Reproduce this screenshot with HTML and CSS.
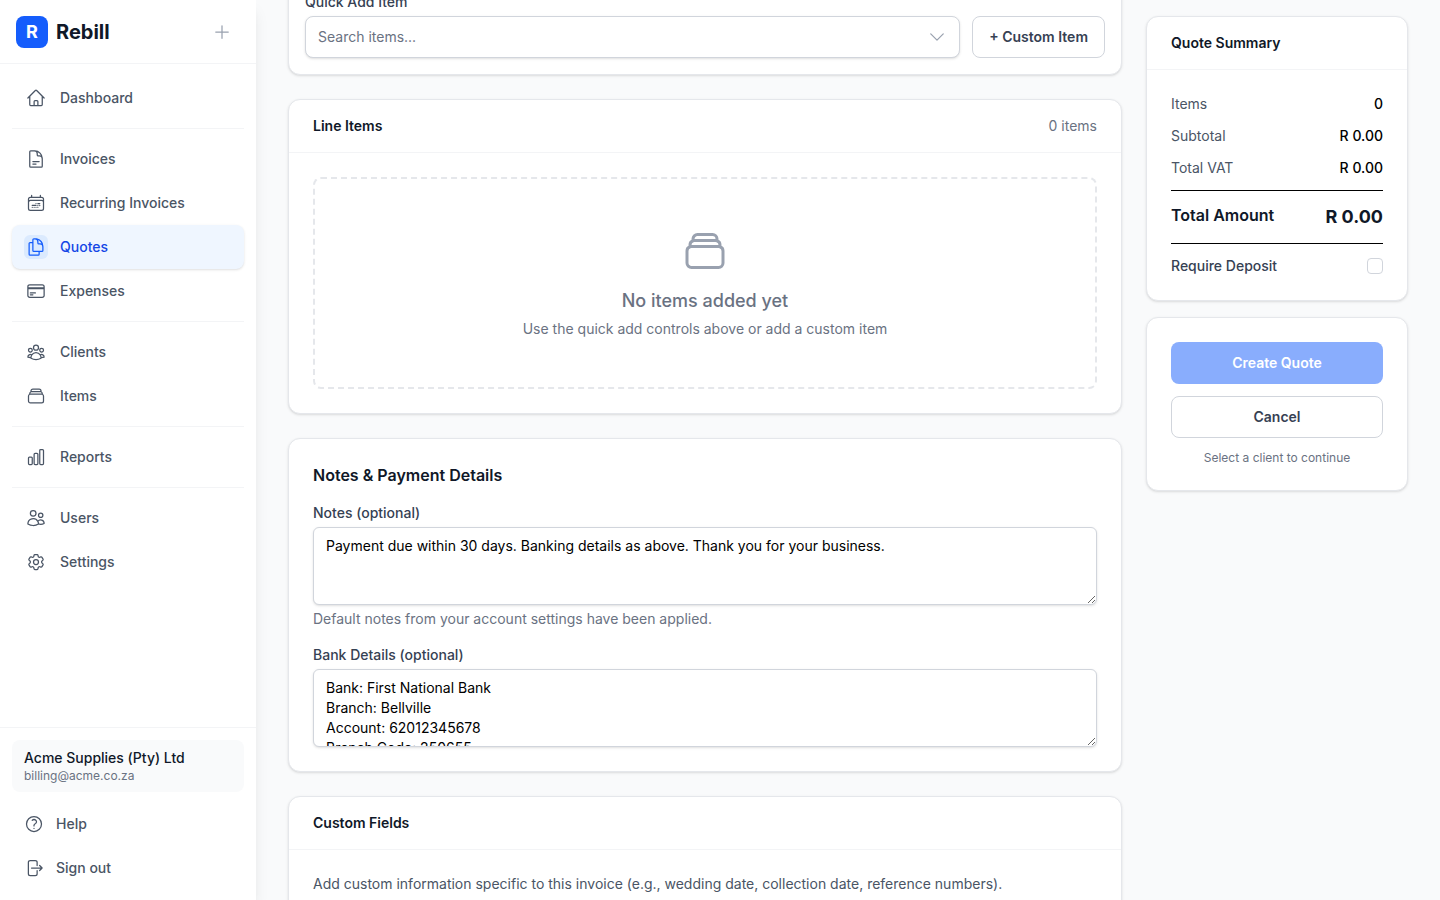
FILE: index.html
```html
<!DOCTYPE html>
<html lang="en">
<head>
    <meta charset="UTF-8">
    <meta name="viewport" content="width=device-width, initial-scale=1.0">
    <title>Create Quote - Rebill</title>
    <link rel="stylesheet" href="styles.css">
</head>
<body>
    <div class="app">
        <aside class="sidebar">
            <div class="sidebar-header">
                <a href="#" class="brand"><span class="logo">R</span>Rebill</a>
                <button type="button" class="add-button" aria-label="Create new">
                    <svg class="icon" viewBox="0 0 24 24"><path d="M12 4.5v15m7.5-7.5h-15"/></svg>
                </button>
            </div>

            <nav class="nav">
                <a href="#" class="nav-link">
                    <span class="nav-icon"><svg class="icon" viewBox="0 0 24 24"><path d="m2.25 12 8.954-8.955c.44-.439 1.152-.439 1.591 0L21.75 12M4.5 9.75v10.125c0 .621.504 1.125 1.125 1.125H9.75v-4.875c0-.621.504-1.125 1.125-1.125h2.25c.621 0 1.125.504 1.125 1.125V21h4.125c.621 0 1.125-.504 1.125-1.125V9.75M8.25 21h8.25"/></svg></span>
                    Dashboard
                </a>
                <hr>
                <a href="#" class="nav-link">
                    <span class="nav-icon"><svg class="icon" viewBox="0 0 24 24"><path d="M19.5 14.25v-2.625a3.375 3.375 0 0 0-3.375-3.375h-1.5A1.125 1.125 0 0 1 13.5 7.125v-1.5a3.375 3.375 0 0 0-3.375-3.375H8.25m0 12.75h7.5m-7.5 3H12M10.5 2.25H5.625c-.621 0-1.125.504-1.125 1.125v17.25c0 .621.504 1.125 1.125 1.125h12.75c.621 0 1.125-.504 1.125-1.125V11.25a9 9 0 0 0-9-9Z"/></svg></span>
                    Invoices
                </a>
                <a href="#" class="nav-link">
                    <span class="nav-icon"><svg class="icon" viewBox="0 0 24 24"><path d="M6.75 2.994v2.25m10.5-2.25v2.25m-14.252 13.5V7.491a2.25 2.25 0 0 1 2.25-2.25h13.5a2.25 2.25 0 0 1 2.25 2.25v11.251m-18 0a2.25 2.25 0 0 0 2.25 2.25h13.5a2.25 2.25 0 0 0 2.25-2.25m-18 0v-7.5a2.25 2.25 0 0 1 2.25-2.25h13.5a2.25 2.25 0 0 1 2.25 2.25v7.5m-6.75-6h2.25m-9 2.25h4.5m.002-2.25h.005v.006H12v-.006Zm-.001 4.5h.006v.006h-.006v-.005Zm-2.25.001h.005v.006H9.75v-.006Zm-2.25 0h.005v.005h-.006v-.005Zm6.75-2.247h.005v.005h-.005v-.005Zm0 2.247h.006v.006h-.006v-.006Zm2.25-2.248h.006V15H16.5v-.005Z"/></svg></span>
                    Recurring Invoices
                </a>
                <a href="#" class="nav-link active" aria-current="page">
                    <span class="nav-icon"><svg class="icon" viewBox="0 0 24 24"><path d="M15.75 17.25v3.375c0 .621-.504 1.125-1.125 1.125h-9.75a1.125 1.125 0 0 1-1.125-1.125V7.875c0-.621.504-1.125 1.125-1.125H6.75a9.06 9.06 0 0 1 1.5.124m7.5 10.376h3.375c.621 0 1.125-.504 1.125-1.125V11.25c0-4.46-3.243-8.161-7.5-8.876a9.06 9.06 0 0 0-1.5-.124H9.375c-.621 0-1.125.504-1.125 1.125v3.5m7.5 10.375H9.375a1.125 1.125 0 0 1-1.125-1.125v-9.25m12 6.625v-1.875a3.375 3.375 0 0 0-3.375-3.375h-1.5a1.125 1.125 0 0 1-1.125-1.125v-1.5a3.375 3.375 0 0 0-3.375-3.375H9.75"/></svg></span>
                    Quotes
                </a>
                <a href="#" class="nav-link">
                    <span class="nav-icon"><svg class="icon" viewBox="0 0 24 24"><path d="M2.25 8.25h19.5M2.25 9h19.5m-16.5 5.25h6m-6 2.25h3m-3.75 3h15a2.25 2.25 0 0 0 2.25-2.25V6.75A2.25 2.25 0 0 0 19.5 4.5h-15a2.25 2.25 0 0 0-2.25 2.25v10.5A2.25 2.25 0 0 0 4.5 19.5Z"/></svg></span>
                    Expenses
                </a>
                <hr>
                <a href="#" class="nav-link">
                    <span class="nav-icon"><svg class="icon" viewBox="0 0 24 24"><path d="M18 18.72a9.094 9.094 0 0 0 3.741-.479 3 3 0 0 0-4.682-2.72m.94 3.198.001.031c0 .225-.012.447-.037.666A11.944 11.944 0 0 1 12 21c-2.17 0-4.207-.576-5.963-1.584A6.062 6.062 0 0 1 6 18.719m12 0a5.971 5.971 0 0 0-.941-3.197m0 0A5.995 5.995 0 0 0 12 12.75a5.995 5.995 0 0 0-5.058 2.772m0 0a3 3 0 0 0-4.681 2.72 8.986 8.986 0 0 0 3.74.477m.94-3.197a5.971 5.971 0 0 0-.94 3.197M15 6.75a3 3 0 1 1-6 0 3 3 0 0 1 6 0Zm6 3a2.25 2.25 0 1 1-4.5 0 2.25 2.25 0 0 1 4.5 0Zm-13.5 0a2.25 2.25 0 1 1-4.5 0 2.25 2.25 0 0 1 4.5 0Z"/></svg></span>
                    Clients
                </a>
                <a href="#" class="nav-link">
                    <span class="nav-icon"><svg class="icon" viewBox="0 0 24 24"><path d="M6 6.878V6a2.25 2.25 0 0 1 2.25-2.25h7.5A2.25 2.25 0 0 1 18 6v.878m-12 0c.235-.083.487-.128.75-.128h10.5c.263 0 .515.045.75.128m-12 0A2.25 2.25 0 0 0 4.5 9v.878m13.5-3A2.25 2.25 0 0 1 19.5 9v.878m0 0a2.246 2.246 0 0 0-.75-.128H5.25c-.263 0-.515.045-.75.128m15 0A2.25 2.25 0 0 1 21 12v6a2.25 2.25 0 0 1-2.25 2.25H5.25A2.25 2.25 0 0 1 3 18v-6c0-.98.626-1.813 1.5-2.122"/></svg></span>
                    Items
                </a>
                <hr>
                <a href="#" class="nav-link">
                    <span class="nav-icon"><svg class="icon" viewBox="0 0 24 24"><path d="M3 13.125C3 12.504 3.504 12 4.125 12h2.25c.621 0 1.125.504 1.125 1.125v6.75C7.5 20.496 6.996 21 6.375 21h-2.25A1.125 1.125 0 0 1 3 19.875v-6.75ZM9.75 8.625c0-.621.504-1.125 1.125-1.125h2.25c.621 0 1.125.504 1.125 1.125v11.25c0 .621-.504 1.125-1.125 1.125h-2.25a1.125 1.125 0 0 1-1.125-1.125V8.625ZM16.5 4.125c0-.621.504-1.125 1.125-1.125h2.25C20.496 3 21 3.504 21 4.125v15.75c0 .621-.504 1.125-1.125 1.125h-2.25a1.125 1.125 0 0 1-1.125-1.125V4.125Z"/></svg></span>
                    Reports
                </a>
                <hr>
                <a href="#" class="nav-link">
                    <span class="nav-icon"><svg class="icon" viewBox="0 0 24 24"><path d="M15 19.128a9.38 9.38 0 0 0 2.625.372 9.337 9.337 0 0 0 4.121-.952 4.125 4.125 0 0 0-7.533-2.493M15 19.128v-.003c0-1.113-.285-2.16-.786-3.07M15 19.128v.106A12.318 12.318 0 0 1 8.624 21c-2.331 0-4.512-.645-6.374-1.766l-.001-.109a6.375 6.375 0 0 1 11.964-3.07M12 6.375a3.375 3.375 0 1 1-6.75 0 3.375 3.375 0 0 1 6.75 0Zm8.25 2.25a2.625 2.625 0 1 1-5.25 0 2.625 2.625 0 0 1 5.25 0Z"/></svg></span>
                    Users
                </a>
                <a href="#" class="nav-link">
                    <span class="nav-icon"><svg class="icon" viewBox="0 0 24 24"><path d="M9.594 3.94c.09-.542.56-.94 1.11-.94h2.593c.55 0 1.02.398 1.11.94l.213 1.281c.063.374.313.686.645.87.074.04.147.083.22.127.325.196.72.257 1.075.124l1.217-.456a1.125 1.125 0 0 1 1.37.49l1.296 2.247a1.125 1.125 0 0 1-.26 1.431l-1.003.827c-.293.241-.438.613-.43.992a7.723 7.723 0 0 1 0 .255c-.008.378.137.75.43.991l1.004.827c.424.35.534.955.26 1.43l-1.298 2.247a1.125 1.125 0 0 1-1.369.491l-1.217-.456c-.355-.133-.75-.072-1.076.124a6.47 6.47 0 0 1-.22.128c-.331.183-.581.495-.644.869l-.213 1.281c-.09.543-.56.94-1.11.94h-2.594c-.55 0-1.019-.398-1.11-.94l-.213-1.281c-.062-.374-.312-.686-.644-.87a6.52 6.52 0 0 1-.22-.127c-.325-.196-.72-.257-1.076-.124l-1.217.456a1.125 1.125 0 0 1-1.369-.49l-1.297-2.247a1.125 1.125 0 0 1 .26-1.431l1.004-.827c.292-.24.437-.613.43-.991a6.932 6.932 0 0 1 0-.255c.007-.38-.138-.751-.43-.992l-1.004-.827a1.125 1.125 0 0 1-.26-1.43l1.297-2.247a1.125 1.125 0 0 1 1.37-.491l1.216.456c.356.133.751.072 1.076-.124.072-.044.146-.086.22-.128.332-.183.582-.495.644-.869l.214-1.28Z"/><path d="M15 12a3 3 0 1 1-6 0 3 3 0 0 1 6 0Z"/></svg></span>
                    Settings
                </a>
            </nav>

            <div class="sidebar-footer">
                <div class="account">
                    <div class="account-name">Acme Supplies (Pty) Ltd</div>
                    <div class="account-email">billing@acme.co.za</div>
                </div>
                <a href="#" class="footer-link">
                    <svg class="icon" viewBox="0 0 24 24"><path d="M9.879 7.519c1.171-1.025 3.071-1.025 4.242 0 1.172 1.025 1.172 2.687 0 3.712-.203.179-.43.326-.67.442-.745.361-1.45.999-1.45 1.827v.75M21 12a9 9 0 1 1-18 0 9 9 0 0 1 18 0Zm-9 5.25h.008v.008H12v-.008Z"/></svg>
                    Help
                </a>
                <button type="button" class="footer-link">
                    <svg class="icon" viewBox="0 0 24 24"><path d="M15.75 9V5.25A2.25 2.25 0 0 0 13.5 3h-6a2.25 2.25 0 0 0-2.25 2.25v13.5A2.25 2.25 0 0 0 7.5 21h6a2.25 2.25 0 0 0 2.25-2.25V15m3 0 3-3m0 0-3-3m3 3H9"/></svg>
                    Sign out
                </button>
            </div>
        </aside>

        <main class="main">
            <form class="quote-form">
                <div class="form-column">
                    <section class="card quick-add">
                        <label for="item-search">Quick Add Item</label>
                        <div class="quick-add-row">
                            <div class="search-box">
                                <input type="text" id="item-search" role="combobox" aria-expanded="false" placeholder="Search items...">
                                <svg class="icon" viewBox="0 0 24 24"><path d="m19.5 8.25-7.5 7.5-7.5-7.5"/></svg>
                            </div>
                            <button type="button" class="btn btn-outline">+ Custom Item</button>
                        </div>
                    </section>

                    <section class="card">
                        <div class="card-header">
                            <h3>Line Items</h3>
                            <span class="item-count">0 items</span>
                        </div>
                        <div class="card-body">
                            <div class="empty-state">
                                <svg class="icon empty-icon" viewBox="0 0 24 24"><path d="M6 6.878V6a2.25 2.25 0 0 1 2.25-2.25h7.5A2.25 2.25 0 0 1 18 6v.878m-12 0c.235-.083.487-.128.75-.128h10.5c.263 0 .515.045.75.128m-12 0A2.25 2.25 0 0 0 4.5 9v.878m13.5-3A2.25 2.25 0 0 1 19.5 9v.878m0 0a2.246 2.246 0 0 0-.75-.128H5.25c-.263 0-.515.045-.75.128m15 0A2.25 2.25 0 0 1 21 12v6a2.25 2.25 0 0 1-2.25 2.25H5.25A2.25 2.25 0 0 1 3 18v-6c0-.98.626-1.813 1.5-2.122"/></svg>
                                <p class="empty-title">No items added yet</p>
                                <p class="empty-text">Use the quick add controls above or add a custom item</p>
                            </div>
                        </div>
                    </section>

                    <section class="card">
                        <div class="card-body notes">
                            <h2>Notes &amp; Payment Details</h2>
                            <div class="field">
                                <label for="notes">Notes (optional)</label>
                                <textarea id="notes" rows="3">Payment due within 30 days. Banking details as above. Thank you for your business.</textarea>
                                <p class="hint">Default notes from your account settings have been applied.</p>
                            </div>
                            <div class="field">
                                <label for="bank-details">Bank Details (optional)</label>
                                <textarea id="bank-details" rows="3">Bank: First National Bank
Branch: Bellville
Account: 62012345678
Branch Code: 250655</textarea>
                            </div>
                        </div>
                    </section>

                    <section class="card">
                        <div class="card-header">
                            <h3>Custom Fields</h3>
                        </div>
                        <div class="card-body">
                            <p class="description">Add custom information specific to this invoice (e.g., wedding date, collection date, reference numbers).</p>
                        </div>
                    </section>
                </div>

                <div class="summary-column">
                    <section class="card">
                        <div class="card-header">
                            <h3>Quote Summary</h3>
                        </div>
                        <div class="card-body summary">
                            <div class="summary-row"><span>Items</span><strong>0</strong></div>
                            <div class="summary-row"><span>Subtotal</span><strong>R 0.00</strong></div>
                            <div class="summary-row"><span>Total VAT</span><strong>R 0.00</strong></div>
                            <div class="summary-total"><span>Total Amount</span><strong>R 0.00</strong></div>
                            <div class="deposit">
                                <label for="deposit">Require Deposit</label>
                                <input type="checkbox" id="deposit">
                            </div>
                        </div>
                    </section>

                    <section class="card">
                        <div class="card-body actions">
                            <button type="submit" class="btn btn-primary" disabled>Create Quote</button>
                            <button type="button" class="btn btn-outline">Cancel</button>
                            <p>Select a client to continue</p>
                        </div>
                    </section>
                </div>
            </form>
        </main>
    </div>
</body>
</html>
```

FILE: styles.css
```css
* {
    box-sizing: border-box;
}
body {
    margin: 0;
    font-family: Inter, "Liberation Sans", sans-serif;
    font-size: 14px;
    line-height: 20px;
    color: #000;
    background-color: #f9fafb;
}
h2, h3, p {
    margin: 0;
}
a {
    color: inherit;
    text-decoration: none;
}
button, input, textarea {
    font: inherit;
    color: inherit;
}
button {
    cursor: pointer;
}
.icon {
    width: 20px;
    height: 20px;
    flex-shrink: 0;
    fill: none;
    stroke: currentColor;
    stroke-width: 1.5;
    stroke-linecap: round;
    stroke-linejoin: round;
}
.app {
    display: flex;
    height: 100vh;
    overflow: hidden;
}

/* Sidebar */
.sidebar {
    display: flex;
    flex-direction: column;
    flex-shrink: 0;
    width: 256px;
    background-color: white;
    box-shadow: 0 10px 15px -3px rgba(0, 0, 0, 0.1), 0 4px 6px -4px rgba(0, 0, 0, 0.1);
}
.sidebar-header {
    display: flex;
    align-items: center;
    justify-content: space-between;
    height: 64px;
    padding: 0 16px;
    border-bottom: 1px solid #f3f4f6;
}
.brand {
    display: flex;
    align-items: center;
    gap: 8px;
    font-size: 20px;
    line-height: 28px;
    font-weight: 700;
    color: #101828;
}
.logo {
    width: 32px;
    height: 32px;
    border-radius: 8px;
    background-color: #155dfc;
    color: white;
    font-size: 18px;
    line-height: 32px;
    text-align: center;
}
.add-button {
    display: flex;
    padding: 8px;
    border: none;
    background: none;
    color: #99a1af;
}
.nav {
    flex: 1;
    padding: 12px;
}
.nav hr {
    margin: 8px 0;
    border: none;
    border-top: 1px solid #f3f4f6;
}
.nav-link {
    display: flex;
    align-items: center;
    gap: 12px;
    padding: 10px 12px;
    border-radius: 8px;
    font-weight: 500;
    line-height: 24px;
    color: #4a5565;
}
.nav-icon {
    display: flex;
    align-items: center;
    justify-content: center;
    width: 24px;
    height: 24px;
    border-radius: 6px;
}
.nav-link.active {
    background-color: #eff6ff;
    color: #1447e6;
    box-shadow: 0 1px 3px rgba(0, 0, 0, 0.1), 0 1px 2px -1px rgba(0, 0, 0, 0.1);
}
.nav-link.active .nav-icon {
    background-color: #dbeafe;
    color: #155dfc;
}
.sidebar-footer {
    display: flex;
    flex-direction: column;
    gap: 4px;
    padding: 12px;
    border-top: 1px solid #f3f4f6;
}
.account {
    margin-bottom: 8px;
    padding: 8px 12px;
    border-radius: 8px;
    background-color: #f9fafb;
}
.account-name {
    font-weight: 500;
    color: #101828;
}
.account-email {
    font-size: 12px;
    line-height: 16px;
    color: #6a7282;
}
.footer-link {
    display: flex;
    align-items: center;
    gap: 12px;
    padding: 10px 12px;
    border: none;
    background: none;
    font-weight: 500;
    color: #4a5565;
}

/* Quote form */
.main {
    flex: 1;
    min-width: 0;
    padding: 0 32px;
}
.quote-form {
    display: grid;
    grid-template-columns: repeat(4, 1fr);
    gap: 24px;
    align-items: start;
}
.form-column {
    grid-column: span 3;
    display: flex;
    flex-direction: column;
    gap: 24px;
    margin-top: -25px;
}
.summary-column {
    display: flex;
    flex-direction: column;
    gap: 16px;
    padding-top: 16px;
}
.card {
    border: 1px solid #e5e7eb;
    border-radius: 12px;
    background-color: white;
    box-shadow: 0 1px 3px rgba(0, 0, 0, 0.1), 0 1px 2px -1px rgba(0, 0, 0, 0.1);
}
.card-header {
    display: flex;
    align-items: center;
    justify-content: space-between;
    padding: 16px 24px;
    border-bottom: 1px solid #f3f4f6;
}
.card-header h3 {
    font-size: 14px;
    font-weight: 600;
    color: #101828;
}
.card-body {
    padding: 24px;
}
.item-count {
    color: #6a7282;
}
label {
    font-weight: 500;
    color: #364153;
}
.quick-add {
    display: flex;
    flex-direction: column;
    gap: 4px;
    padding: 16px;
}
.quick-add-row {
    display: flex;
    gap: 12px;
}
.search-box {
    flex: 1;
    display: flex;
    align-items: center;
    padding: 0 12px;
    border: 1px solid #d1d5dc;
    border-radius: 8px;
    background-color: white;
    box-shadow: 0 1px 3px rgba(0, 0, 0, 0.1), 0 1px 2px -1px rgba(0, 0, 0, 0.1);
    color: #99a1af;
}
.search-box input {
    flex: 1;
    min-width: 0;
    padding: 0;
    border: none;
    outline: none;
    background: none;
    color: #000;
}
.search-box input::placeholder {
    color: #6a7282;
}
.btn {
    padding: 10px 16px;
    border: 1px solid transparent;
    border-radius: 8px;
    font-weight: 600;
}
.btn-outline {
    border-color: #d1d5dc;
    background-color: white;
    color: #364153;
}
.btn-primary {
    background-color: #155dfc;
    color: white;
}
.btn-primary:disabled {
    opacity: 0.5;
    cursor: not-allowed;
}
.empty-state {
    display: flex;
    flex-direction: column;
    align-items: center;
    padding: 48px 24px;
    border: 2px dashed #e5e7eb;
    border-radius: 8px;
    color: #6a7282;
}
.empty-icon {
    width: 48px;
    height: 48px;
    color: #99a1af;
}
.empty-title {
    margin: 12px 0 4px;
    font-size: 18px;
    line-height: 28px;
    font-weight: 500;
}
.notes {
    display: flex;
    flex-direction: column;
    gap: 16px;
}
.notes h2 {
    font-size: 16px;
    line-height: 24px;
    font-weight: 600;
    color: #101828;
}
.field {
    display: flex;
    flex-direction: column;
    gap: 4px;
}
.field textarea {
    padding: 8px 12px;
    border: 1px solid #d1d5dc;
    border-radius: 6px;
    background-color: white;
    box-shadow: 0 1px 3px rgba(0, 0, 0, 0.1), 0 1px 2px -1px rgba(0, 0, 0, 0.1);
    resize: vertical;
    overflow: hidden;
}
.hint {
    color: #6a7282;
}
.description {
    color: #4a5565;
}

/* Summary */
.summary {
    display: flex;
    flex-direction: column;
    gap: 12px;
}
.summary-row, .summary-total, .deposit {
    display: flex;
    justify-content: space-between;
}
.summary-row span {
    color: #4a5565;
}
.summary-row strong {
    font-weight: 500;
}
.summary-total {
    padding: 12px 0;
    border-top: 1px solid #000;
    border-bottom: 1px solid #000;
    font-size: 16px;
    line-height: 24px;
    font-weight: 600;
    color: #101828;
}
.summary-total strong {
    font-size: 18px;
    line-height: 28px;
    font-weight: 700;
}
.deposit {
    align-items: center;
}
.deposit input {
    appearance: none;
    width: 16px;
    height: 16px;
    margin: 0;
    border: 1px solid #d1d5dc;
    border-radius: 4px;
    background-color: white;
}
.deposit input:checked {
    background-color: #155dfc;
}
.actions {
    display: flex;
    flex-direction: column;
    gap: 12px;
}
.actions p {
    font-size: 12px;
    line-height: 16px;
    text-align: center;
    color: #6a7282;
}
```
